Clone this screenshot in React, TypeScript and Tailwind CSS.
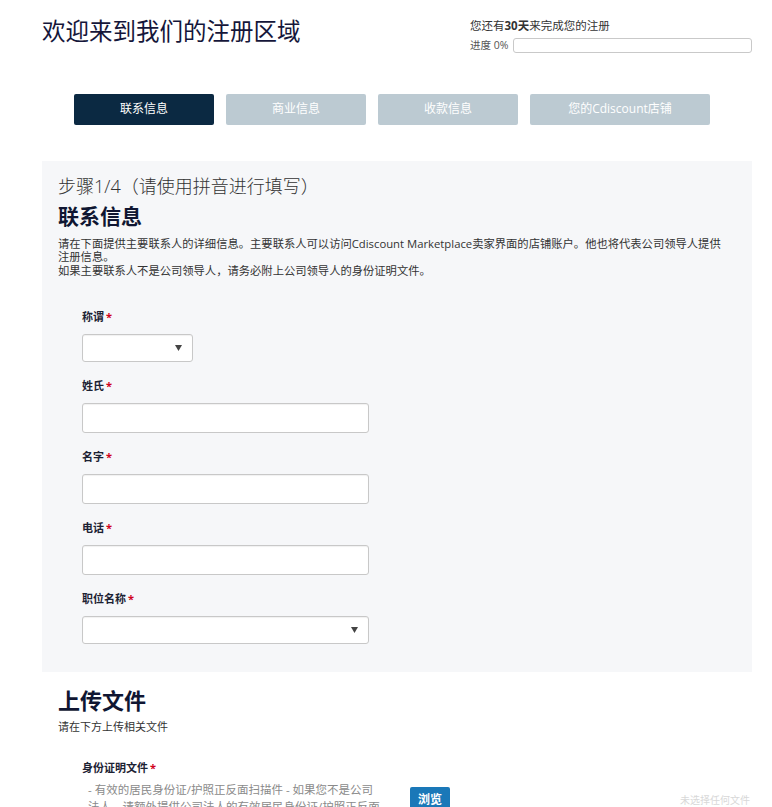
const font = { fontFamily: '"Open Sans", "Noto Sans CJK SC", sans-serif' };

function Label({ text }: { text: string }) {
  return (
    <div className="h-4 text-[11px] font-bold leading-4 text-[#1c2233]">
      {text}
      <span className="ml-0.5 text-[#d0021b]">*</span>
    </div>
  );
}

function Caret() {
  return (
    <svg width="7" height="6" viewBox="0 0 7 6" className="text-[#444]">
      <path d="M0 0h7L3.5 6z" fill="currentColor" />
    </svg>
  );
}

function Field({ label, kind, width }: { label: string; kind: "input" | "select"; width: string }) {
  return (
    <div className="flex flex-col">
      <Label text={label} />
      <div
        className={`mt-[9px] flex items-center justify-end rounded-[3px] border border-[#c8c8c8] bg-white pr-[10px] shadow-[inset_0_1px_1px_rgba(0,0,0,0.06)] ${width} ${kind === "select" ? "h-[28px]" : "h-[30px]"}`}
      >
        {kind === "select" && <Caret />}
      </div>
    </div>
  );
}

export default function App() {
  const tabs = [
    { name: "联系信息", w: "w-[140px]", active: true },
    { name: "商业信息", w: "w-[140px]", active: false },
    { name: "收款信息", w: "w-[140px]", active: false },
    { name: "您的Cdiscount店铺", w: "w-[180px]", active: false },
  ];
  return (
    <div className="min-h-[807px] w-[772px] overflow-hidden bg-white text-[#333]" style={font}>
      {/* header */}
      <header className="flex items-start justify-between pl-[42px] pr-[20px] pt-[15px]">
        <h1 className="text-[23.5px] font-normal leading-[32px] text-[#15163a]">欢迎来到我们的注册区域</h1>
        <div className="mt-[4px] w-[282px]">
          <div className="text-[11.5px] leading-[14px] text-[#333]">
            您还有<span className="font-bold">30天</span>来完成您的注册
          </div>
          <div className="mt-[5px] flex items-center gap-[5px]">
            <span className="whitespace-nowrap text-[10.5px] text-[#555]">进度 0%</span>
            <div className="h-[15px] flex-1 rounded-[3px] border border-[#c9c9c9] bg-white" />
          </div>
        </div>
      </header>

      {/* step tabs */}
      <nav className="ml-[74px] mt-[40px] flex gap-[12px]">
        {tabs.map((t) => (
          <div
            key={t.name}
            className={`flex h-[31px] items-center justify-center rounded-[2px] text-[12px] text-white ${t.w} ${t.active ? "bg-[#0b2942]" : "bg-[#bccad2]"}`}
          >
            {t.name}
          </div>
        ))}
      </nav>

      {/* contact panel */}
      <section className="ml-[42px] mr-[20px] mt-[36px] bg-[#f6f7f9] pb-[28px] pl-[16px] pr-[16px] pt-[13px]">
        <div className="text-[18px] font-light leading-[24px] text-[#333]">步骤1/4（请使用拼音进行填写）</div>
        <h2 className="mt-[5px] text-[21px] font-bold leading-[26px] text-[#0f1632]">联系信息</h2>
        <p className="mt-[8px] max-w-[671px] text-[11.3px] leading-[13.5px] text-[#333]">
          请在下面提供主要联系人的详细信息。主要联系人可以访问Cdiscount Marketplace卖家界面的店铺账户。他也将代表公司领导人提供注册信息。
          <br />
          如果主要联系人不是公司领导人，请务必附上公司领导人的身份证明文件。
        </p>
        <div className="ml-[24px] mt-[32px] flex flex-col gap-[16px]">
          <Field label="称谓" kind="select" width="w-[111px]" />
          <Field label="姓氏" kind="input" width="w-[287px]" />
          <Field label="名字" kind="input" width="w-[287px]" />
          <Field label="电话" kind="input" width="w-[287px]" />
          <Field label="职位名称" kind="select" width="w-[287px]" />
        </div>
      </section>

      {/* upload */}
      <section className="pl-[58px] pt-[14px]">
        <h2 className="text-[22px] font-bold leading-[28px] text-[#0f1632]">上传文件</h2>
        <div className="mt-[6px] text-[11px] leading-[14px] text-[#333]">请在下方上传相关文件</div>
        <div className="ml-[24px] mt-[26px]">
          <Label text="身份证明文件" />
          <div className="mt-[5px] flex items-start">
            <p className="ml-[6px] w-[296px] text-[11.5px] leading-[17px] text-[#8a8a8a]">
              - 有效的居民身份证/护照正反面扫描件 - 如果您不是公司法人，请额外提供公司法人的有效居民身份证/护照正反面扫描件
            </p>
            <div className="ml-[26px] mt-[6px] flex h-[26px] w-[40px] items-center justify-center rounded-[2px] bg-[#1a78b8] text-[12px] font-bold text-white">
              浏览
            </div>
            <div className="ml-auto mr-[22px] mt-[12px] text-[10px] text-[#d8d8d8]">未选择任何文件</div>
          </div>
        </div>
      </section>
    </div>
  );
}
